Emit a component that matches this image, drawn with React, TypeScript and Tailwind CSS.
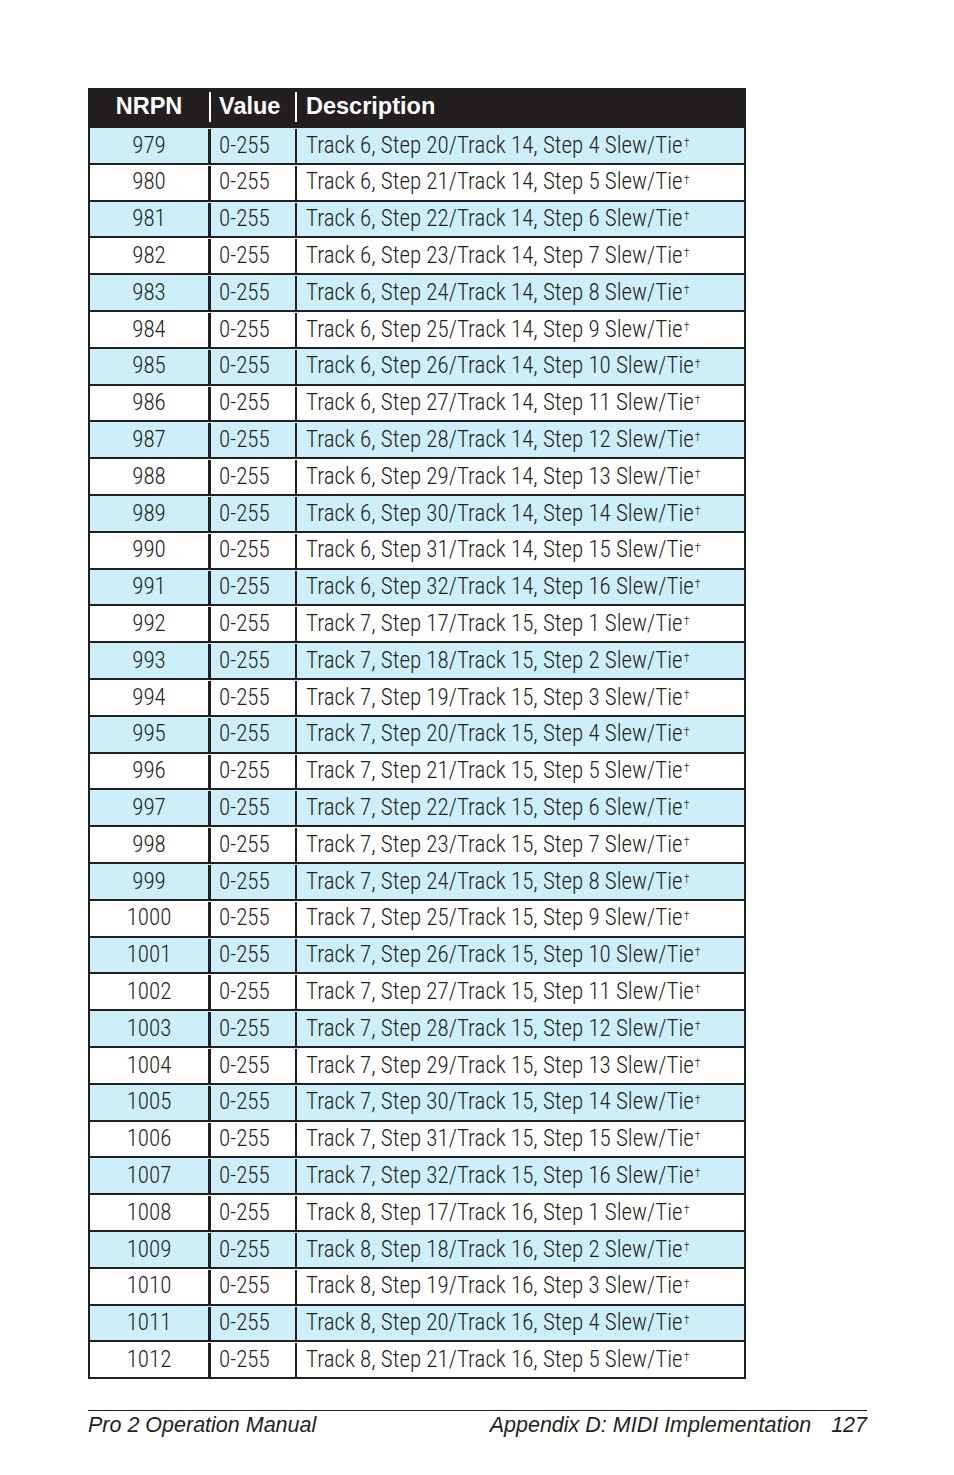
const rows: [string, string][] = [];

let n = 979;
// Track 6 steps 20..32 / Track 14 steps 4..16
for (let s = 20; s <= 32; s++) {
  rows.push([String(n++), `Track 6, Step ${s}/Track 14, Step ${s - 16} Slew/Tie`]);
}
for (let s = 17; s <= 32; s++) {
  rows.push([String(n++), `Track 7, Step ${s}/Track 15, Step ${s - 16} Slew/Tie`]);
}
for (let s = 17; s <= 21; s++) {
  rows.push([String(n++), `Track 8, Step ${s}/Track 16, Step ${s - 16} Slew/Tie`]);
}

const narrow = { fontFamily: '"Roboto Condensed", "Liberation Sans", sans-serif' };

export default function App() {
  return (
    <div className="w-[954px] h-[1475px] bg-white pt-[88px] pl-[88px]" style={{ fontFamily: '"Liberation Sans", Arial, sans-serif' }}>
      <div className="w-[658px] border-2 border-t-0 border-[#231f20] text-[#231f20]">
        <div className="flex h-[38px] bg-[#231f20] text-white font-bold text-[23.5px] items-center">
          <div className="w-[121px] h-full flex items-center justify-center pr-[3px] relative">
            NRPN
            <span className="absolute right-0 top-[4px] bottom-[4px] w-[2px] bg-white" />
          </div>
          <div className="w-[86px] h-full flex items-center pl-[8px] relative">
            Value
            <span className="absolute right-0 top-[4px] bottom-[4px] w-[2px] bg-white" />
          </div>
          <div className="flex-1 pl-[9px]">Description</div>
        </div>
        {rows.map(([num, d], i) => (
          <div
            key={num}
            className={`flex h-[36.8px] border-t-2 border-[#231f20] text-[23px] font-light whitespace-nowrap pt-[1px] ${i % 2 === 0 ? "bg-[#cceffa]" : "bg-white"}`}
            style={narrow}
          >
            <div className="w-[121px] border-r-[3px] border-[#231f20] flex items-center justify-center">{num}</div>
            <div className="w-[86px] border-r-2 border-[#231f20] flex items-center pl-[8px]">0-255</div>
            <div className="flex-1 flex items-center pl-[9px]">
              {d}
              <sup className="text-[12px] relative -top-[3px] ml-[1px]">†</sup>
            </div>
          </div>
        ))}
      </div>
      <div className="w-[779px] mt-[31px] border-t border-[#231f20] flex justify-between italic text-[21.5px] text-[#231f20] leading-[28px]">
        <span>Pro 2 Operation Manual</span>
        <span>
          Appendix D: MIDI Implementation<span className="ml-[20px]">127</span>
        </span>
      </div>
    </div>
  );
}
